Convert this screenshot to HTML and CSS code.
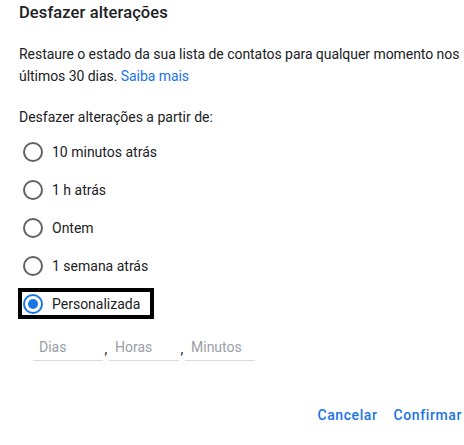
FILE: index.html
```html
<!DOCTYPE html>
<html lang="pt">
<head>
<meta charset="utf-8">
<link rel="stylesheet" href="styles.css">
</head>
<body>
<div class="dialog">
  <h1 class="title">Desfazer alterações</h1>
  <p class="desc">Restaure o estado da sua lista de contatos para qualquer momento nos últimos 30 dias. <a class="link" href="#">Saiba mais</a></p>
  <p class="label">Desfazer alterações a partir de:</p>
  <div class="options">
    <div class="row"><span class="opt"><span class="radio"></span><span class="opt-text">10 minutos atrás</span></span></div>
    <div class="row"><span class="opt"><span class="radio"></span><span class="opt-text">1 h atrás</span></span></div>
    <div class="row"><span class="opt"><span class="radio"></span><span class="opt-text">Ontem</span></span></div>
    <div class="row"><span class="opt"><span class="radio"></span><span class="opt-text">1 semana atrás</span></span></div>
    <div class="row"><span class="opt focused"><span class="radio checked"></span><span class="opt-text">Personalizada</span></span></div>
  </div>
  <div class="custom">
    <span class="field">Dias</span><span class="comma">,</span><span class="field">Horas</span><span class="comma">,</span><span class="field">Minutos</span>
  </div>
  <div class="actions">
    <span class="btn">Cancelar</span>
    <span class="btn">Confirmar</span>
  </div>
</div>
</body>
</html>
```
FILE: styles.css
```css
html, body {
  margin: 0;
  padding: 0;
  background: #ffffff;
}
body {
  font-family: Roboto, "Liberation Sans", sans-serif;
  color: #3c4043;
}
.dialog {
  width: 464px;
  height: 445px;
  padding: 1px 0 0 19px;
  box-sizing: border-box;
}
.title {
  margin: 0;
  font-size: 16.5px;
  line-height: 24px;
  font-weight: 500;
  color: #202124;
  letter-spacing: 0.1px;
}
.desc {
  margin: 18px 0 0 0;
  font-size: 14px;
  line-height: 22px;
  color: #202124;
  padding-right: 0;
  letter-spacing: -0.05px;
}
.link {
  color: #1a73e8;
  text-decoration: none;
}
.label {
  margin: 19px 0 0 0;
  font-size: 14px;
  line-height: 22px;
  color: #202124;
}
.options {
  margin-top: 4px;
  display: flex;
  flex-direction: column;
}
.row {
  height: 38px;
  display: flex;
  align-items: center;
}
.opt {
  display: inline-flex;
  align-items: center;
  margin-left: -1px;
  border: 4px solid transparent;
  padding: 2px 10px 1px 1px;
}
.opt.focused {
  border-color: #000000;
}
.radio {
  width: 20px;
  height: 20px;
  box-sizing: border-box;
  border: 2px solid #5f6368;
  border-radius: 50%;
  display: flex;
  align-items: center;
  justify-content: center;
}
.radio.checked {
  border-color: #1a73e8;
}
.radio.checked::after {
  content: "";
  width: 10px;
  height: 10px;
  border-radius: 50%;
  background: #1a73e8;
}
.opt-text {
  margin-left: 9px;
  font-size: 14px;
  line-height: 20px;
  color: #202124;
}
.custom {
  margin-top: 15px;
  margin-left: 14px;
  display: flex;
  align-items: flex-end;
}
.field {
  width: 70px;
  box-sizing: border-box;
  padding: 0 6px 3px 6px;
  border-bottom: 1px solid #dadce0;
  font-size: 14px;
  line-height: 20px;
  color: #9aa0a6;
}
.comma {
  width: 6px;
  font-size: 14px;
  line-height: 20px;
  color: #202124;
  text-align: center;
  padding-bottom: 2px;
}
.actions {
  margin-top: 36px;
  display: flex;
  justify-content: flex-end;
  gap: 16px;
  padding-right: 2px;
}
.btn {
  height: 36px;
  display: flex;
  align-items: center;
  font-size: 14px;
  font-weight: 500;
  color: #1a73e8;
  letter-spacing: 0.6px;
}
```
